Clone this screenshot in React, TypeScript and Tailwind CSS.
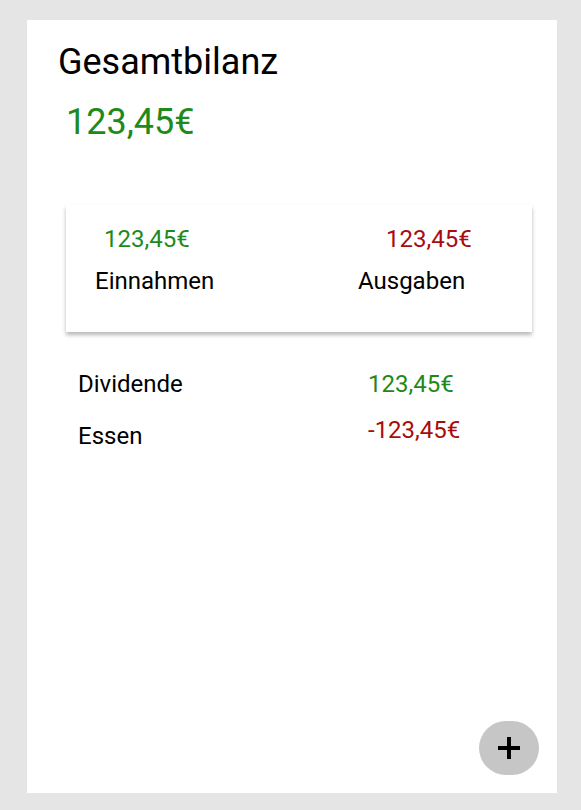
export default function App() {
  const rows = [
    { label: "Dividende", amount: "123,45€", color: "text-[#1f8a1a]", labelTop: "mt-0" },
    { label: "Essen", amount: "-123,45€", color: "text-[#a80c0c]", labelTop: "mt-[6px]" },
  ];

  return (
    <div className="h-[810px] bg-[#e5e5e5] pt-5 pl-[27px] pr-6 pb-[17px] font-['Roboto',sans-serif] text-black">
      <div className="relative flex h-full flex-col bg-white">
        <h1 className="mt-6 pl-[31px] text-[36px] leading-none font-normal">Gesamtbilanz</h1>
        <p className="mt-6 pl-[39px] text-[36px] leading-none text-[#1f8a1a]">123,45€</p>

        <div className="mt-[65px] ml-[39px] mr-[25px] grid grid-cols-2 bg-white pt-[22px] pb-[39px] shadow-[0_3px_4px_rgba(0,0,0,0.28)]">
          <div className="flex flex-col gap-[18px]">
            <span className="pl-[38px] text-[24px] leading-none text-[#1f8a1a]">123,45€</span>
            <span className="pl-[29px] text-[24px] leading-none">Einnahmen</span>
          </div>
          <div className="flex flex-col gap-[18px]">
            <span className="pl-[87px] text-[24px] leading-none text-[#a80c0c]">123,45€</span>
            <span className="pl-[59px] text-[24px] leading-none">Ausgaben</span>
          </div>
        </div>

        <div className="mt-10 flex flex-col gap-[22px] pl-[51px]">
          {rows.map((r) => (
            <div key={r.label} className="flex items-start text-[24px] leading-none">
              <span className={`w-[290px] ${r.labelTop}`}>{r.label}</span>
              <span className={r.color}>{r.amount}</span>
            </div>
          ))}
        </div>

        <button className="absolute right-[18px] bottom-[18px] flex h-[54px] w-[60px] items-center justify-center rounded-full bg-[#c6c6c6]">
          <svg width="26" height="26" viewBox="0 0 26 26">
            <path d="M13 2v22M2 13h22" stroke="#000" strokeWidth="4" />
          </svg>
        </button>
      </div>
    </div>
  );
}
